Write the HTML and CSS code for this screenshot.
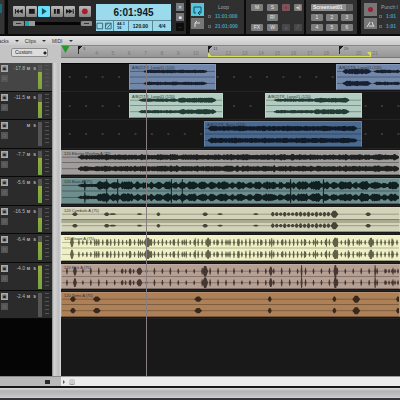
FILE: index.html
```
<!DOCTYPE html>
<html lang="en">
<head>
<meta charset="utf-8">
<title>Track view</title>
<link rel="stylesheet" href="styles.css">
</head>
<body>
<div class="app">
  <header class="toolbar">
    <div class="edge"></div>
    <section class="transport">
      <div class="keys">
        <button class="key" aria-label="Rewind"><svg viewBox="0 0 12 11"><path d="M6 3v5L3 5.500zM10 3v5L6 5.500zM2 3h1v5H2z"/></svg></button>
        <button class="key" aria-label="Stop"><svg viewBox="0 0 12 11"><path d="M3 3h6v5H3z"/></svg></button>
        <button class="key on" aria-label="Play"><svg viewBox="0 0 12 11"><path d="M4 2l5 3.500L4 9z"/></svg></button>
        <button class="key" aria-label="Pause"><svg viewBox="0 0 12 11"><path d="M3 3h2v5H3zM6 3h3v5H6z"/></svg></button>
        <button class="key" aria-label="Forward"><svg viewBox="0 0 12 11"><path d="M2 3v5l4-2.500zM5 3v5l4-2.500zM9 3h1v5H9z"/></svg></button>
        <button class="key rec" aria-label="Record"><svg viewBox="0 0 12 11"><circle cx="6" cy="5.500" r="3"/></svg></button>
      </div>
      <div class="scrub">
        <button class="mini" aria-label="Previous"><i></i></button>
        <input type="range" value="0" aria-label="Position">
        <button class="mini" aria-label="Audio engine"><i></i></button>
      </div>
    </section>
    <section class="lcd">
      <div class="time">6:01:945</div>
      <div class="status">
        <span class="icons"><svg viewBox="0 0 18 8"><path d="M1 1h6v6H1zM10 1h6v6h-6zM12 6l4-5M10 4l3-3"/></svg></span>
        <span class="rate">44.1<br>16</span>
        <span class="tempo">120.00</span>
        <span class="meter-sig">4/4</span>
      </div>
    </section>
    <div class="side">
      <button class="sq" aria-label="Metronome">✕</button>
      <button class="sq" aria-label="Count in">■</button>
      <button class="sq off" aria-label="Options">–</button>
    </div>
    <section class="range">
      <div class="stack">
        <button class="tile cyan" aria-label="Loop"><svg viewBox="0 0 13 12"><path d="M5 9H3V3h7v6H7M9 7L7 9l2 2"/></svg></button>
        <button class="tile" aria-label="Loop range"><svg viewBox="0 0 13 12"><path d="M4 9V5h5M4 5l2-2"/></svg></button>
      </div>
      <div class="values"><b>Loop</b><span><i></i>11:01:000</span><span><i></i>21:01:000</span></div>
    </section>
    <section class="mix">
      <button class="chip">M</button><button class="chip">S</button><button class="chip red" aria-label="Arm">●</button><button class="chip">◂)</button>
      <span></span><button class="chip">R!</button><span></span><span></span>
      <button class="chip">FX</button><button class="chip">W</button><button class="chip dim">⌂</button><button class="chip dim">⁄</button>
    </section>
    <section class="screens">
      <select aria-label="Screenset"><option>Screenset01</option></select>
      <button class="chip">1</button><button class="chip">2</button><button class="chip">3</button>
      <button class="chip">4</button><button class="chip">5</button><button class="chip">6</button>
    </section>
    <section class="range punch">
      <div class="stack">
        <button class="tile" aria-label="Punch"><em></em></button>
        <button class="tile" aria-label="Punch range"><svg viewBox="0 0 13 12"><path d="M3 9l3-5M10 9L8 4M5 8h4"/></svg></button>
      </div>
      <div class="values"><b>Punch I</b><span><i></i>1:01</span><span><i></i>1:01</span></div>
    </section>
  </header>

  <nav class="menus">
    <button>Tracks <i></i></button><button>Clips <i></i></button><button>MIDI <i></i></button>
  </nav>

  <div class="ruler-row">
    <div class="preset"><select aria-label="Track layout"><option>Custom</option></select></div>
    <div class="ruler">
      <div class="bars" id="bars"></div>
      <span class="loop-range"></span>
      <svg class="start" viewBox="0 0 8 8"><path d="M0 0h8L4 7z"/></svg>
    </div>
  </div>

  <main class="work">
    <div class="tracks" id="tracks"></div>
    <div class="divider"></div>
    <div class="lanes-area">
      <div class="lanes" id="lanes"></div>
      <span class="playhead"></span>
    </div>
  </main>

  <footer>
    <div class="scroll"><div class="scroll-left"><i></i></div><div class="scroll-track"><b></b><i></i></div></div>
    <div class="tabs"></div>
  </footer>
</div>
<script src="script.js"></script>
</body>
</html>
```
FILE: styles.css
```
* { box-sizing: border-box; }
body { margin: 0; background: #222; font-family: "Liberation Sans", Arial, sans-serif; font-size: 5px; line-height: 6px; }
button, select, input { font: inherit; margin: 0; padding: 0; border: 0; appearance: none; }
button { display: block; color: #222; }
svg { display: block; }
.app { display: flex; flex-direction: column; min-height: 100vh; overflow: hidden; background: #c4c4c4; }

.toolbar { display: flex; height: 36px; background: #272727; border-bottom: 2px solid #0b0b0b; overflow: hidden; }
.toolbar > * { flex: none; }
.edge { width: 8px; background: linear-gradient(90deg, #353535 4px, #080808 5px); }
.edge::before { content: ""; display: block; width: 2px; height: 9px; margin-top: 4px; background: #176b7b; }
.transport { width: 88px; padding: 6px 5px 0; }
.keys { display: flex; gap: 1px; }
.key { width: 12px; height: 11px; border-radius: 1px; background: linear-gradient(#b9b9b9, #848484); }
.key svg { fill: #191919; }
.key.on { background: #67dff8; }
.key.on svg { fill: #12566c; }
.key.rec { margin-left: 3px; }
.key.rec svg { fill: #b1192d; }
.scrub { display: flex; align-items: center; gap: 1px; margin-top: 4px; width: 79px; }
.mini { width: 11px; height: 5px; background: #8b8b8b; border-radius: 1px; }
.mini i { display: block; width: 5px; height: 1px; margin: 2px 3px; background: #333; }
.scrub input { flex: 1; min-width: 0; height: 5px; background: linear-gradient(transparent 1px, #050505 1px 4px, transparent 4px); }
.scrub input::-webkit-slider-thumb { appearance: none; width: 10px; height: 5px; background: linear-gradient(90deg, #20a4ad 4px, #999 4px); }
.lcd { width: 75px; height: 27px; margin-top: 4px; background: #9bd9ed; color: #0d1c22; font-weight: bold; }
.time { height: 16px; line-height: 17px; font-size: 10px; text-align: center; }
.status { display: flex; height: 11px; border-top: 1px solid #5b8695; }
.status span { display: flex; align-items: center; justify-content: center; border-right: 1px solid #5b8695; line-height: 4px; }
.status .icons { width: 18px; }
.icons svg { width: 18px; height: 8px; fill: none; stroke: #376472; }
.status .rate { width: 15px; font-size: 4px; }
.status .tempo { width: 24px; }
.status .meter-sig { flex: 1; border: 0; }
.side { width: 19px; padding: 3px 0 0 5px; display: grid; grid-template-rows: 8px 8px 8px; gap: 2px; border-right: 4px solid #0b0b0b; }
.sq { width: 8px; height: 8px; background: #777; color: #eee; line-height: 8px; }
.sq.off { background: #0d0d0d; color: #555; }

.range { display: flex; width: 56px; border-right: 2px solid #0b0b0b; background: #303030; }
.stack { width: 18px; padding: 3px 1px 0; display: grid; grid-template-rows: 13px 11px; gap: 2px; align-content: start; }
.tile { width: 13px; background: #777; display: grid; place-items: center; }
.tile svg { width: 13px; height: 12px; fill: none; stroke: #ddd; }
.tile.cyan { background: #55c6e0; }
.tile.cyan svg { stroke: #164b5c; }
.tile em { width: 5px; height: 5px; border-radius: 50%; background: #9c2036; }
.values { flex: 1; display: grid; grid-template-rows: 8px 10px 10px; padding-top: 3px; color: #3fa0b8; }
.values b { color: #a2a2a2; font-weight: normal; padding-left: 10px; line-height: 8px; white-space: nowrap; }
.values span { display: flex; align-items: center; gap: 4px; font-weight: bold; line-height: 10px; white-space: nowrap; }
.values i { flex: none; width: 3px; height: 3px; border: 1px solid #666; }
.mix { width: 60px; padding: 4px 4px 0 5px; display: grid; grid-template-columns: 12px 11px 8px 8px; column-gap: 4px; row-gap: 4px; grid-auto-rows: 6px; border-right: 2px solid #0b0b0b; background: #303030; }
.chip { height: 7px; background: #7d7d7d; color: #e8e8e8; line-height: 7px; border-radius: 1px; overflow: hidden; }
.chip.red { color: #b51c3c; background: #79555b; }
.chip.dim { background: #484848; color: #888; }
.screens { width: 55px; padding: 4px 4px 0 5px; display: grid; grid-template-columns: 12px 12px 12px; gap: 3px; grid-auto-rows: 7px; border-right: 4px solid #0b0b0b; background: #303030; }
.screens select { grid-column: span 3; height: 7px; padding-left: 2px; line-height: 7px; color: #eee; background: linear-gradient(90deg, #8e8e8e 35px, #666 35px); border-radius: 1px; font-weight: bold; }
.punch { border: 0; flex: 1 0 39px; }
.punch .stack { padding-left: 3px; }
.punch .values b { padding-left: 2px; }

.menus { display: flex; gap: 6px; height: 9px; background: linear-gradient(#e4e4e4, #c9c9c9); overflow: hidden; }
.menus button { background: none; line-height: 8px; color: #333; display: flex; align-items: center; gap: 6px; }
.menus button:first-child { margin-left: -6px; }
.menus i { border: 2px solid transparent; border-top-color: #333; border-bottom: 0; }

.ruler-row { display: flex; height: 18px; background: #c4c4c4; }
.preset { flex: none; width: 61px; padding: 3px 0 0 11px; }
.preset select { width: 37px; height: 9px; padding-left: 3px; border: 1px solid #8d8d8d; border-radius: 2px; color: #222; background: radial-gradient(circle at 33px 4px, #222 1px, transparent 2px), #ddd; line-height: 7px; }
.ruler { flex: 1; position: relative; min-width: 0; height: 13px; background: linear-gradient(#aeaeae, #969696); border-top: 1px solid #888; border-bottom: 1px solid #777; }
.bars { display: flex; overflow: hidden; height: 11px; }
.bar { flex: 0 0 4.81%; padding: 4px 0 0 1px; font-size: 5px; color: #777; height: 11px; }
.bar.lead { flex-basis: 5%; }
.bar.flag { padding: 0 0 0 5px; font-size: 4px; color: #444; background: linear-gradient(135deg, #191919 3px, transparent 3px) 0 0 / 5px 5px no-repeat, linear-gradient(#333, #333) 0 0 / 1px 8px no-repeat; }
.loop-range { position: absolute; left: 43.5%; right: 8.5%; bottom: 0; height: 5px; border-bottom: 1px solid #d9df54; }
.loop-range::before, .loop-range::after { content: ""; position: absolute; left: 0; bottom: -1px; border: 5px solid transparent; border-left: 5px solid #d9df54; border-width: 5px 0 0 4px; }
.loop-range::after { left: auto; right: 0; border-width: 0 4px 5px 0; border-color: transparent #d9df54 transparent transparent; }
.start { position: absolute; left: 0; top: 0; width: 9px; height: 8px; fill: #249a2b; }

.work { flex: 1; display: flex; background: #191919; min-height: 313px; }
.tracks { flex: none; width: 52px; background: #050505; }
.tracks, .lanes { display: grid; grid-template-rows: 29px 28px 29px 28px 29px 28px 29px 28px 28px; align-content: start; }
.track { display: grid; grid-template-columns: 8px 15px 5px 5px 4px 6px; column-gap: 1px; padding: 2px 1px; background: #2b2b2b; border-bottom: 1px solid #090909; color: #b5b5b5; overflow: hidden; }
.track.selected { background: #454545; }
.track .left { display: grid; align-content: start; gap: 3px; }
.track button { width: 7px; height: 7px; line-height: 7px; background: #aaa; }
.track .left button + button { background: #555; color: #888; }
.track .gain { text-align: right; line-height: 7px; }
.track .flat { width: 5px; background: none; color: #bbb; font-weight: bold; font-size: 4px; }
.level { width: 4px; height: 24px; background: #555; display: flex; align-items: flex-end; }
.level i { width: 4px; background: linear-gradient(#93ac3b, #78a443); }
.scale { height: 24px; margin-left: 2px; background: repeating-linear-gradient(#555 0 1px, transparent 1px 4px); }
.divider { flex: none; width: 9px; background: linear-gradient(90deg, #888, #d5d5d5 2px, #bcbcbc 7px, #ddd); }
.lanes-area { flex: 1; position: relative; min-width: 0; overflow: hidden; border-top: 1px solid #060606; }
.lanes-area .lanes { margin-top: -1px; }
.lane { position: relative; border-bottom: 1px solid #242424; background: radial-gradient(circle at 9px 14px, #393935 0 1px, transparent 1px) 0 0 / 4.85% 28px; background-color: #171717; }
.clip { position: absolute; top: 1px; bottom: 1px; overflow: hidden; border: 1px solid rgba(255, 255, 255, .15); border-bottom-color: rgba(0, 0, 0, .3); }
.clip svg { width: 100%; height: 100%; }
.clip span { position: absolute; left: 2px; top: 0; font-size: 4px; line-height: 5px; color: #333; white-space: nowrap; }
.blue { background: #7188aa; } .mint { background: #b3ccc1; } .navy { background: #496991; }
.gray { background: #a19d9d; } .teal { background: #6e8d8d; }
.sage { background: linear-gradient(#d3d3ba 11px, #a9ab90 11px 15px, #d3d3ba 15px); }
.cream { background: #eff0c5; } .rose { background: #b69f93; } .rust { background: #ad8058; }
.playhead { position: absolute; top: 0; bottom: 0; left: 25%; width: 1px; background: #857d80; }

footer { flex: none; }
.scroll { display: flex; height: 10px; }
.scroll-left { flex: none; width: 61px; background: #b9b9b9; padding: 3px 0 0 45px; border-top: 1px solid #888; }
.scroll-left i { display: block; width: 5px; height: 4px; background: #292929; }
.scroll-track { flex: 1; display: flex; align-items: center; gap: 4px; padding-left: 2px; background: #ebebeb; border-top: 1px solid #999; }
.scroll-track b { border: 2px solid transparent; border-left-color: #555; border-right: 0; }
.scroll-track i { width: 6px; height: 6px; background: #ccc; border-bottom: 1px solid #999; border-radius: 2px; }
.tabs { height: 14px; border-top: 2px solid #171717; border-bottom: 2px solid #33333a; background: linear-gradient(#ddd, #b4b4b4 3px, #c4c4c4 9px, #ddd); }
```
FILE: script.js
```
const TIMELINE = 339;
const CENTERS = [7, 20];

let seed = 7;
function rand() {
  seed = (seed * 16807) % 2147483647;
  return seed / 2147483647;
}

// Solid waveform between two positions, tapered at both ends.
function dense(from, to, amp, channels = CENTERS) {
  return channels.map(c => {
    let top = '', bottom = '';
    for (let x = from; x <= to; x += 1) {
      const edge = Math.min(1, (x - from + 1) / 4, (to - x + 1) / 4);
      const a = (amp * edge * (0.65 + 0.35 * rand())).toFixed(1);
      top += `L${x} ${c - a}`;
      bottom = `L${x} ${c + Number(a)}` + bottom;
    }
    return `M${from} ${c}${top}${bottom}Z`;
  }).join('');
}

// Separate hits, each one a narrow diamond: [position, amplitude, half width].
function hits(list) {
  return CENTERS.map(c => list.map(([x, a, w]) =>
    `M${x - w} ${c}L${x - w / 3} ${c - a}L${x + w / 3} ${c - a}L${x + w} ${c}L${x + w / 3} ${c + a}L${x - w / 3} ${c + a}Z`
  ).join('')).join('');
}

function every(from, to, step, amp, width) {
  const list = [];
  for (let x = from; x < to; x += step) list.push([x, amp * (0.6 + 0.4 * rand()), width]);
  return list;
}

function phrases(from, to, amp) {
  let d = '';
  for (let x = from; x < to;) {
    const n = 6 + Math.round(rand() * 10);
    d += dense(x, Math.min(to, x + n), amp * (0.8 + 0.2 * rand()));
    x += n - 1;
  }
  return d;
}

const tracks = [
  { gain: '-17.8', level: 17, selected: true, clips: [
    { x: 68, w: 87, tone: 'blue', ink: '#172131', name: 'A/B(2)TR_Loop01 (120)', d: dense(14, 79, 2) },
    { x: 275, w: 66, tone: 'blue', ink: '#172131', name: 'A/B(2)TR_Loop01 (120)', d: dense(6, 35, 3) + dense(38, 66, 2) } ] },
  { gain: '-11.5', level: 16, clips: [
    { x: 68, w: 94, tone: 'mint', ink: '#233b35', name: 'A/B(2)TR_Loop01 (120)', d: dense(9, 50, 2) + dense(48, 88, 3) },
    { x: 204, w: 97, tone: 'mint', ink: '#233b35', name: 'A/B(2)TR_Loop01 (120)', d: dense(8, 50, 2) + dense(48, 85, 3) } ] },
  { gain: '', level: 0, clips: [
    { x: 143, w: 158, tone: 'navy', ink: '#101b27', name: 'A/B(2)TR_Bass (120)', d: dense(3, 154, 3) } ] },
  { gain: '-7.7', level: 17, clips: [
    { x: 0, w: 339, tone: 'gray', ink: '#202020', name: '120 Electro Rhythm A (75)', d: phrases(34, 339, 4) + dense(16, 339, 3) } ] },
  { gain: '-5.6', level: 17, clips: [
    { x: 0, w: 339, tone: 'teal', ink: '#101f1f', name: '120 Bass A (75)', d: phrases(34, 339, 5) + dense(16, 339, 2) + hits([[23, 6, 1], [45, 7, 1], [56, 7, 1], [110, 7, 1], [121, 7, 1], [230, 7, 1], [263, 7, 1]]) } ] },
  { gain: '-16.5', level: 14, clips: [
    { x: 0, w: 339, tone: 'sage', ink: '#454637', name: '120 Cymbals A (75)', d: hits([[13, 2, 3], [45, 2, 3], [51, 1, 4], [78, 1, 3], [97, 2, 2], [144, 2, 3], [159, 1, 3], [195, 1, 3], [274, 4, 4], [308, 2, 3], ...every(212, 272, 4, 3, 2)]) } ] },
  { gain: '-6.4', level: 18, clips: [
    { x: 0, w: 339, tone: 'cream', ink: '#62624a', name: '120 Snare A (75)', d: hits([[10, 5, 2], [86, 5, 4], [147, 5, 2], [275, 5, 3], [311, 5, 2], ...every(17, 339, 4, 4, 1), ...every(35, 339, 11, 5, 1)]) } ] },
  { gain: '-4.0', level: 23, clips: [
    { x: 0, w: 339, tone: 'rose', ink: '#443630', name: '120 Kick A (75)', d: hits([[13, 5, 2], [78, 4, 3], [144, 6, 3], [210, 5, 2], [275, 7, 2], [241, 7, 1], [315, 7, 1], ...every(5, 339, 8, 4, 1), ...every(60, 78, 4, 3, 1), ...every(326, 339, 3, 3, 1)]) } ] },
  { gain: '-2.4', level: 0, clips: [
    { x: 0, w: 339, tone: 'rust', ink: '#38281c', name: '120 Toms A (75)', d: hits([[11, 3, 3], [35, 3, 4], [137, 3, 4], [209, 3, 2], [274, 3, 2], [296, 4, 4], [338, 3, 2]]) } ] }
];

document.getElementById('tracks').innerHTML = tracks.map((t, i) => `
  <div class="track${t.selected ? ' selected' : ''}">
    <div class="left"><button aria-label="Expand track ${i + 1}">▣</button><button aria-label="Track ${i + 1} options">□</button></div>
    <span class="gain">${t.gain}</span>
    <button class="flat">M</button><button class="flat">S</button>
    <div class="level"><i style="height:${t.level}px"></i></div>
    <div class="scale"></div>
  </div>`).join('');

const percent = v => (v / TIMELINE * 100).toFixed(2) + '%';

document.getElementById('lanes').innerHTML = tracks.map(t => `
  <div class="lane">${t.clips.map(c => `
    <div class="clip ${c.tone}" style="left:${percent(c.x)};width:${percent(c.w)}">
      <span>${c.name}</span>
      <svg viewBox="0 0 ${c.w} 26" preserveAspectRatio="none">
        <path d="M0 7H${c.w}M0 13H${c.w}M0 20H${c.w}" stroke="${c.ink}" stroke-opacity=".6" stroke-width=".7"/>
        <path d="${c.d}" fill="${c.ink}"/>
      </svg>
    </div>`).join('')}
  </div>`).join('');

let bars = '<span class="bar lead"></span>';
for (let n = 3; n <= 21; n += 1) {
  bars += `<span class="bar${(n - 3) % 8 === 0 ? ' flag' : ''}">${n}</span>`;
}
document.getElementById('bars').innerHTML = bars;
```
